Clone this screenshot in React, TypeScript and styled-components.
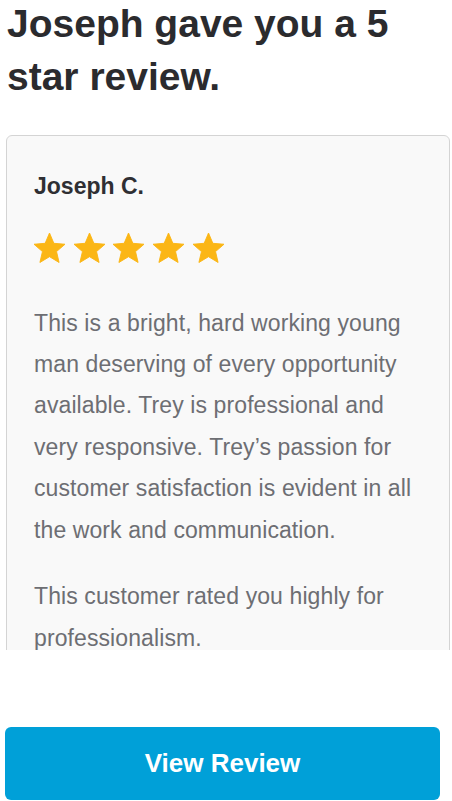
import React from 'react';
import styled, { createGlobalStyle } from 'styled-components';

const GlobalStyle = createGlobalStyle`
  html, body {
    margin: 0;
    padding: 0;
    background: #ffffff;
  }
  body {
    font-family: "Liberation Sans", Arial, Helvetica, sans-serif;
    -webkit-font-smoothing: antialiased;
  }
`;

const Page = styled.div`
  width: 452px;
  height: 801px;
  overflow: hidden;
  display: flex;
  flex-direction: column;
`;

const Heading = styled.h1`
  margin: -3px 0 32px 7px;
  font-size: 39px;
  line-height: 53px;
  font-weight: 700;
  color: #2b2b2e;
`;

const CardClip = styled.div`
  height: 515px;
  margin: 0 2px 0 6px;
  overflow: hidden;
`;

const Card = styled.div`
  border: 1px solid #d4d4d4;
  border-radius: 6px;
  background: #f9f9f9;
  padding: 37px 27px 40px 27px;
`;

const Name = styled.div`
  font-size: 23px;
  line-height: 26px;
  font-weight: 700;
  color: #2f2f33;
`;

const Stars = styled.div`
  display: flex;
  gap: 8.7px;
  margin: 34px 0 40px 0;
`;

const Paragraph = styled.p<{ $spaced?: boolean }>`
  margin: ${p => (p.$spaced ? '25.5px' : '0')} 0 0 0;
  font-size: 23px;
  line-height: 41.4px;
  letter-spacing: 0.1px;
  color: #6d6e73;
`;

const Button = styled.button`
  margin: 77px 12px 0 5px;
  height: 73px;
  border: none;
  border-radius: 6px;
  background: #00a0d8;
  color: #ffffff;
  font-family: "Liberation Sans", Arial, Helvetica, sans-serif;
  font-size: 26px;
  font-weight: 700;
  cursor: pointer;
`;

const Star: React.FC = () => (
  <svg width="31" height="29.5" viewBox="2 2 20 19" aria-hidden="true">
    <path
      d="M12 17.27L18.18 21l-1.64-7.03L22 9.24l-7.19-.61L12 2 9.19 8.63 2 9.24l5.46 4.73L5.82 21z"
      fill="#fbb615"
      stroke="#fbb615"
      strokeWidth="0.6"
      strokeLinejoin="round"
    />
  </svg>
);

export default function App() {
  return (
    <>
      <GlobalStyle />
      <Page>
        <Heading>Joseph gave you a 5 star review.</Heading>
        <CardClip>
          <Card>
            <Name>Joseph C.</Name>
            <Stars>
              {[0, 1, 2, 3, 4].map(i => (
                <Star key={i} />
              ))}
            </Stars>
            <Paragraph>
              This is a bright, hard working young man deserving of every opportunity
              available. Trey is professional and very responsive. Trey’s passion for
              customer satisfaction is evident in all the work and communication.
            </Paragraph>
            <Paragraph $spaced>This customer rated you highly for professionalism.</Paragraph>
          </Card>
        </CardClip>
        <Button>View Review</Button>
      </Page>
    </>
  );
}
